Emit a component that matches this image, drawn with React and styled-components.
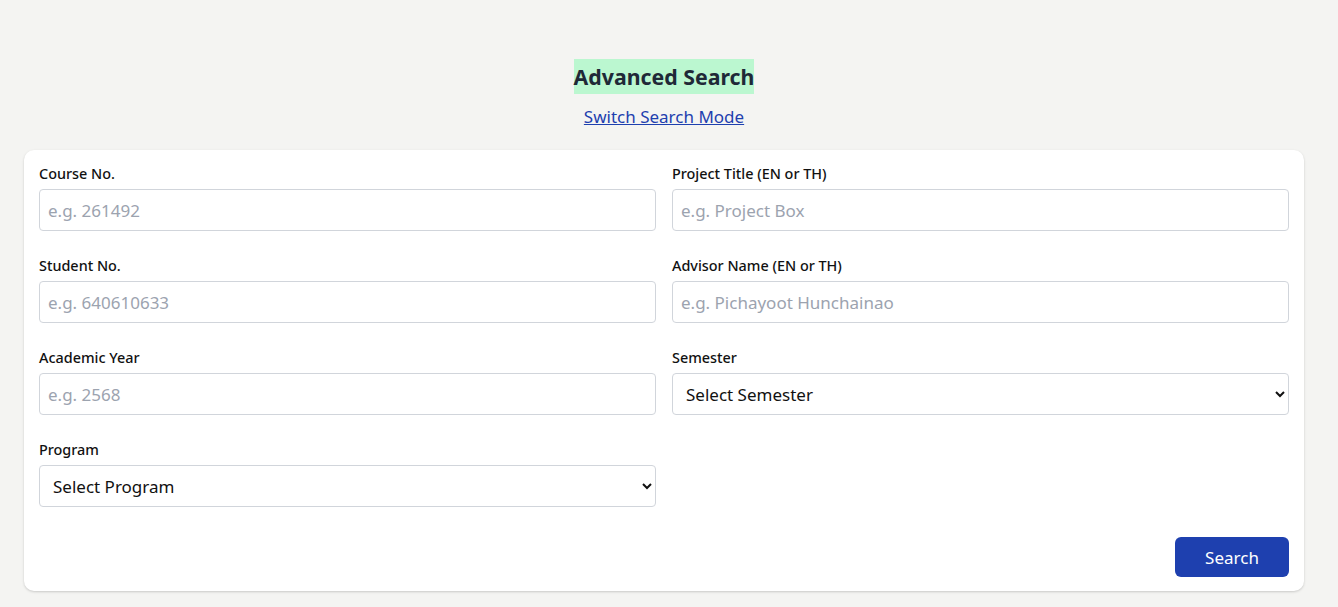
import React from "react";
import styled, { createGlobalStyle } from "styled-components";

const Global = createGlobalStyle`
  html, body { margin: 0; padding: 0; background: #f4f4f2; }
  body { font-family: "Noto Sans", "Open Sans", sans-serif; color: #111827; }
  * { box-sizing: border-box; }
`;

const Page = styled.div`
  padding: 59px 34px 16px 24px;
  display: flex;
  flex-direction: column;
  align-items: center;
`;

const Title = styled.h1`
  margin: 0;
  font-size: 21.3px;
  line-height: 35px;
  font-weight: 700;
  color: #1f2937;
  background: #bbf7d0;
  padding: 0;
`;

const SwitchLink = styled.a`
  margin-top: 11px;
  font-size: 17px;
  line-height: 24px;
  color: #1e40af;
  text-decoration: underline;
  cursor: pointer;
`;

const Card = styled.form`
  margin-top: 21px;
  align-self: stretch;
  background: #fff;
  border-radius: 10px;
  box-shadow: 0 1px 3px rgba(0,0,0,0.12), 0 1px 2px rgba(0,0,0,0.06);
  padding: 14px 15px 14px;
  display: flex;
  flex-direction: column;
`;

const Grid = styled.div`
  display: grid;
  grid-template-columns: 1fr 1fr;
  column-gap: 16px;
  row-gap: 25px;
`;

const Field = styled.div`
  display: flex;
  flex-direction: column;
  gap: 5px;
`;

const Label = styled.label`
  font-size: 14.4px;
  line-height: 20px;
  font-weight: 500;
  color: #111;
`;

const Input = styled.input`
  height: 42px;
  border: 1px solid #d1d5db;
  border-radius: 4px;
  padding: 0 8px;
  font-family: inherit;
  font-size: 17px;
  color: #111;
  outline: none;
  &::placeholder { color: #9ca3af; }
`;

const Select = styled.select`
  height: 42px;
  border: 1px solid #d1d5db;
  border-radius: 4px;
  padding: 0 9px;
  font-family: inherit;
  font-size: 17px;
  color: #111;
  background: #fff;
  outline: none;
`;

const Actions = styled.div`
  display: flex;
  justify-content: flex-end;
  margin-top: 30px;
`;

const Button = styled.button`
  width: 114px;
  height: 40px;
  border: none;
  border-radius: 6px;
  background: #1e40af;
  color: #fff;
  font-family: inherit;
  font-size: 17px;
  cursor: pointer;
`;

export default function App() {
  return (
    <>
      <Global />
      <Page>
        <Title>Advanced Search</Title>
        <SwitchLink>Switch Search Mode</SwitchLink>
        <Card onSubmit={(e) => e.preventDefault()}>
          <Grid>
            <Field>
              <Label>Course No.</Label>
              <Input placeholder="e.g. 261492" />
            </Field>
            <Field>
              <Label>Project Title (EN or TH)</Label>
              <Input placeholder="e.g. Project Box" />
            </Field>
            <Field>
              <Label>Student No.</Label>
              <Input placeholder="e.g. 640610633" />
            </Field>
            <Field>
              <Label>Advisor Name (EN or TH)</Label>
              <Input placeholder="e.g. Pichayoot Hunchainao" />
            </Field>
            <Field>
              <Label>Academic Year</Label>
              <Input placeholder="e.g. 2568" />
            </Field>
            <Field>
              <Label>Semester</Label>
              <Select defaultValue="">
                <option value="">Select Semester</option>
              </Select>
            </Field>
            <Field>
              <Label>Program</Label>
              <Select defaultValue="">
                <option value="">Select Program</option>
              </Select>
            </Field>
          </Grid>
          <Actions>
            <Button type="submit">Search</Button>
          </Actions>
        </Card>
      </Page>
    </>
  );
}
